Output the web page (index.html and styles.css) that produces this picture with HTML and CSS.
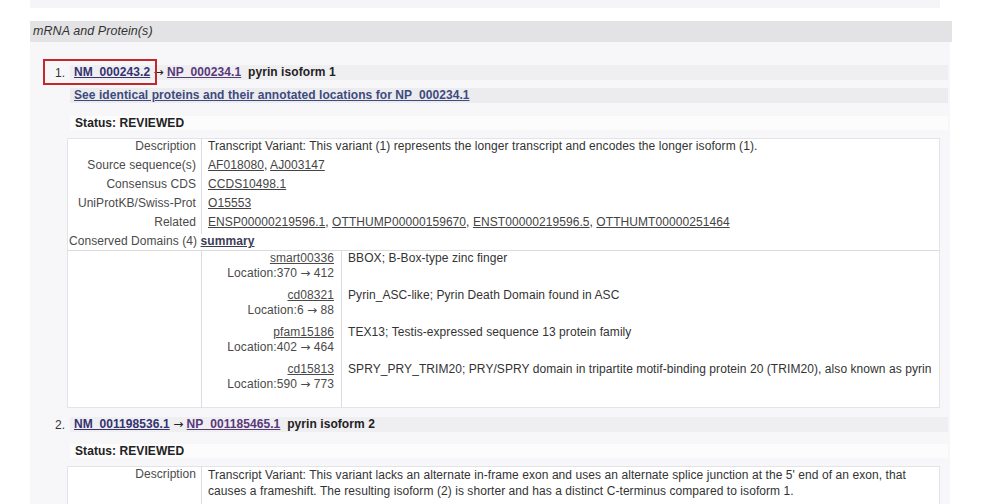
FILE: index.html
```html
<!DOCTYPE html>
<html>
<head>
    <title>mRNA and Protein(s)</title>
    <link rel="stylesheet" href="styles.css">
</head>
<body>
    <div class="page">
        <div class="prev-section"></div>
        <h3 class="section-head">mRNA and Protein(s)</h3>
        <div class="section-body">
            <div class="item">
                <div class="item-head">
                    <span class="num">1.</span>
                    <div class="band">
                        <a href="#" class="acc">NM_000243.2</a> <span class="arr">&rarr;</span> <a href="#" class="acc visited">NP_000234.1</a>&nbsp; pyrin isoform 1
                    </div>
                    <span class="highlight"></span>
                </div>
                <div class="band sub"><a href="#" class="ipg">See identical proteins and their annotated locations for NP_000234.1</a></div>
                <div class="status">Status: REVIEWED</div>
                <table class="details">
                    <tr><th>Description</th><td>Transcript Variant: This variant (1) represents the longer transcript and encodes the longer isoform (1).</td></tr>
                    <tr><th>Source sequence(s)</th><td><a href="#">AF018080</a>, <a href="#">AJ003147</a></td></tr>
                    <tr><th>Consensus CDS</th><td><a href="#">CCDS10498.1</a></td></tr>
                    <tr><th>UniProtKB/Swiss-Prot</th><td><a href="#">O15553</a></td></tr>
                    <tr><th>Related</th><td><a href="#">ENSP00000219596.1</a>, <a href="#">OTTHUMP00000159670</a>, <a href="#">ENST00000219596.5</a>, <a href="#">OTTHUMT00000251464</a></td></tr>
                    <tr><th colspan="2" class="cd-title">Conserved Domains (4) <a href="#" class="bold-link">summary</a></th></tr>
                    <tr class="domains">
                        <th></th>
                        <td>
                            <table class="domain-table">
                                <tr><td class="dom-id"><a href="#">smart00336</a><br>Location:370 <span class="arr">&rarr;</span> 412</td><td class="dom-desc">BBOX; B-Box-type zinc finger</td></tr>
                                <tr><td class="dom-id"><a href="#">cd08321</a><br>Location:6 <span class="arr">&rarr;</span> 88</td><td class="dom-desc">Pyrin_ASC-like; Pyrin Death Domain found in ASC</td></tr>
                                <tr><td class="dom-id"><a href="#">pfam15186</a><br>Location:402 <span class="arr">&rarr;</span> 464</td><td class="dom-desc">TEX13; Testis-expressed sequence 13 protein family</td></tr>
                                <tr><td class="dom-id"><a href="#">cd15813</a><br>Location:590 <span class="arr">&rarr;</span> 773</td><td class="dom-desc">SPRY_PRY_TRIM20; PRY/SPRY domain in tripartite motif-binding protein 20 (TRIM20), also known as pyrin</td></tr>
                            </table>
                        </td>
                    </tr>
                </table>
            </div>

            <div class="item">
                <div class="item-head">
                    <span class="num">2.</span>
                    <div class="band">
                        <a href="#" class="acc">NM_001198536.1</a> <span class="arr">&rarr;</span> <a href="#" class="acc visited">NP_001185465.1</a>&nbsp; pyrin isoform 2
                    </div>
                </div>
                <div class="status">Status: REVIEWED</div>
                <table class="details">
                    <tr><th>Description</th><td class="wrap">Transcript Variant: This variant lacks an alternate in-frame exon and uses an alternate splice junction at the 5' end of an exon, that causes a frameshift. The resulting isoform (2) is shorter and has a distinct C-terminus compared to isoform 1.</td></tr>
                </table>
            </div>
        </div>
    </div>
</body>
</html>
```

FILE: styles.css
```css
body {
    margin: 0;
    padding: 0;
    background-color: #ffffff;
    font-family: "Liberation Sans", Arial, sans-serif;
    font-size: 12px;
    letter-spacing: 0.07px;
    color: #222;
}

.page {
    width: 922px;
    margin-left: 30px;
}

.prev-section {
    height: 8px;
    margin-right: 12px;
    background-color: #f5f5f8;
}

.section-head {
    margin: 13px 0 0 0;
    height: 21px;
    line-height: 21px;
    padding-left: 3px;
    background-color: #e3e3e5;
    font-size: 12.5px;
    font-weight: normal;
    font-style: italic;
    color: #333;
}

.section-body {
    width: 920px;
    padding: 23px 0 40px 0;
    background-color: #f7f7fa;
}

.item {
    padding-left: 25px;
    margin-bottom: 9px;
}

.item-head {
    position: relative;
    display: flex;
    align-items: center;
}

.num {
    width: 15px;
    color: #333;
}

.arr {
    font-family: "DejaVu Sans", sans-serif;
    font-weight: normal;
    font-size: 12px;
    letter-spacing: 0;
}

.band {
    flex: 1;
    height: 15px;
    line-height: 15px;
    margin-right: 2px;
    padding-left: 4px;
    background-color: #efeef1;
    font-weight: bold;
    color: #222;
}

.band.sub {
    margin: 8px 2px 0 15px;
    background-color: #ececee;
}

.highlight {
    position: absolute;
    left: -12px;
    top: -6px;
    width: 110px;
    height: 22px;
    border: 2px solid #c4262e;
}

a {
    color: #444;
}

.acc {
    color: #34336f;
}

.acc.visited {
    color: #58397a;
}

.ipg {
    color: #3d4a80;
}

.status {
    margin: 13px 2px 0 15px;
    padding-left: 5px;
    height: 14px;
    line-height: 14px;
    background-color: #fcfcfd;
    font-weight: bold;
    color: #222;
}

.item + .item .status {
    margin-top: 12px;
}

table {
    border-collapse: collapse;
}

.details {
    width: 873px;
    margin: 8px 0 0 12px;
    background-color: #ffffff;
    border: 1px solid #e4e4e8;
    color: #333;
}

.details th,
.details td {
    padding: 0 0 4px 0;
    line-height: 15px;
    vertical-align: top;
    text-align: left;
    font-weight: normal;
}

.details th {
    width: 128px;
    padding-right: 5px;
    text-align: right;
    color: #4a4a4a;
    border-right: 1px solid #dcdce0;
}

.details td {
    padding-left: 6px;
}

.details td.wrap {
    line-height: 16px;
    padding-bottom: 14px;
}

.details th.cd-title {
    text-align: left;
    border-right: none;
    padding-left: 1px;
    padding-bottom: 1px;
}

.bold-link {
    font-weight: bold;
    color: #3c3c55;
}

.domains th,
.domains > td {
    border-top: 1px solid #dcdce0;
    padding-bottom: 0;
}

.domains > td {
    padding-left: 0;
}

.domain-table {
    width: 100%;
}

.domain-table td {
    padding: 0 0 7px 0;
    line-height: 15px;
    vertical-align: top;
}

.domain-table td.dom-id {
    width: 132px;
    padding-right: 7px;
    text-align: right;
    color: #4a4a4a;
    border-right: 1px solid #dcdce0;
}

.domain-table td.dom-desc {
    padding-left: 6px;
    color: #333;
}

.domain-table tr:last-child td {
    padding-bottom: 15px;
}

.dom-id a {
    color: #4a4a4a;
}
```
